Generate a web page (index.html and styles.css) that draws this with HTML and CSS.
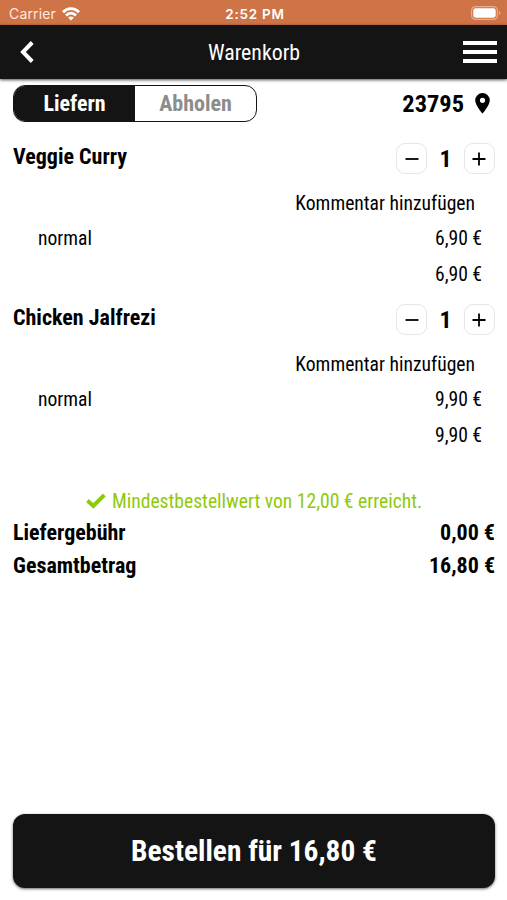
FILE: index.html
```html
<!DOCTYPE html>
<html lang="de">
<head>
  <meta charset="UTF-8">
  <meta name="viewport" content="width=device-width, initial-scale=1.0">
  <title>Warenkorb</title>
  <link rel="stylesheet" href="styles.css">
</head>
<body>
  <div class="status-bar">
    <div class="carrier">
      <span>Carrier</span>
      <svg width="18" height="14" viewBox="0 0 18 14" fill="none" stroke="#fff" stroke-width="2.8">
        <path d="M1 5.2C5.5 .5 12.5 .5 17 5.2"/>
        <path d="M4 8.5C7 5.5 11 5.5 14 8.5"/>
        <path d="M9 13.5L6.2 10.7C7.8 9.2 10.2 9.2 11.8 10.7Z" fill="#fff" stroke="none"/>
      </svg>
    </div>
    <div class="time">2:52 PM</div>
    <div class="battery">
      <svg width="30" height="15" viewBox="0 0 30 15">
        <rect x=".6" y=".6" width="25.8" height="12.8" rx="4" fill="none" stroke="#e3ae94" stroke-width="1.2"/>
        <rect x="2.3" y="2.3" width="22.4" height="9.4" rx="2.4" fill="#fff"/>
        <path d="M28 5Q31 7 28 9Z" fill="#e3ae94"/>
      </svg>
    </div>
  </div>

  <header class="header">
    <svg class="back" width="14" height="22" viewBox="0 0 14 22" fill="none" stroke="#fff" stroke-width="4">
      <path d="M12.2 1.5L3 11L12.2 20.5"/>
    </svg>
    <h1>Warenkorb</h1>
    <div class="menu"><span></span><span></span><span></span></div>
  </header>

  <main class="cart">
    <div class="delivery">
      <div class="toggle">
        <div class="toggle-option active">Liefern</div>
        <div class="toggle-option">Abholen</div>
      </div>
      <div class="location">
        <span>23795</span>
        <svg width="15" height="21" viewBox="0 0 15 21">
          <path fill="#000" fill-rule="evenodd" d="M7.5 0A7.3 7.3 0 0 0 .2 7.3C.2 12.5 7.5 20.6 7.5 20.6S14.8 12.5 14.8 7.3A7.3 7.3 0 0 0 7.5 0ZM7.5 4.7A2.6 2.6 0 1 1 7.5 9.9A2.6 2.6 0 1 1 7.5 4.7Z"/>
        </svg>
      </div>
    </div>

    <div class="item">
      <div class="item-head">
        <h2>Veggie Curry</h2>
        <div class="stepper">
          <button><svg width="14" height="14" viewBox="0 0 14 14"><path d="M.5 7H13.5"/></svg></button>
          <span>1</span>
          <button><svg width="14" height="14" viewBox="0 0 14 14"><path d="M.5 7H13.5M7 .5V13.5"/></svg></button>
        </div>
      </div>
      <div class="comment">Kommentar hinzufügen</div>
      <div class="item-row"><span>normal</span><span>6,90 €</span></div>
      <div class="item-row"><span></span><span>6,90 €</span></div>
    </div>

    <div class="item">
      <div class="item-head">
        <h2>Chicken Jalfrezi</h2>
        <div class="stepper">
          <button><svg width="14" height="14" viewBox="0 0 14 14"><path d="M.5 7H13.5"/></svg></button>
          <span>1</span>
          <button><svg width="14" height="14" viewBox="0 0 14 14"><path d="M.5 7H13.5M7 .5V13.5"/></svg></button>
        </div>
      </div>
      <div class="comment">Kommentar hinzufügen</div>
      <div class="item-row"><span>normal</span><span>9,90 €</span></div>
      <div class="item-row"><span></span><span>9,90 €</span></div>
    </div>

    <div class="minimum">
      <svg width="20" height="16" viewBox="0 0 20 16" fill="none" stroke="#8fca0a" stroke-width="4">
        <path d="M1.5 7.5L7.3 13L18.3 2"/>
      </svg>
      <span>Mindestbestellwert von 12,00 € erreicht.</span>
    </div>

    <div class="total-row"><span>Liefergebühr</span><span>0,00 €</span></div>
    <div class="total-row"><span>Gesamtbetrag</span><span>16,80 €</span></div>
  </main>

  <footer class="footer">
    <button class="order-btn">Bestellen für 16,80 €</button>
  </footer>
</body>
</html>
```
FILE: styles.css
```css
* {
  box-sizing: border-box;
}
body {
  display: flex;
  flex-direction: column;
  height: 900px;
  margin: 0;
  background-color: #fff;
  color: #000;
  font-family: 'Roboto Condensed', Roboto, sans-serif;
  font-stretch: 75%;
  font-size: 19.6px;
  overflow: hidden;
}
svg {
  display: block;
}
h1, h2 {
  margin: 0;
}
button {
  font-family: inherit;
  font-stretch: inherit;
  padding: 0;
}
.status-bar {
  display: grid;
  grid-template-columns: 1fr auto 1fr;
  align-items: center;
  height: 25px;
  padding: 2px 6px 0 9px;
  background-color: #cf7446;
  color: #fff;
  font-family: Inter, sans-serif;
  font-stretch: normal;
  font-size: 14px;
}
.carrier {
  display: flex;
  align-items: center;
  gap: 6px;
  color: #fbe9df;
  letter-spacing: 0.15px;
}
.time {
  font-size: 13.5px;
  font-weight: 600;
  letter-spacing: 0.75px;
}
.battery {
  justify-self: end;
}
.header {
  display: grid;
  grid-template-columns: 1fr auto 1fr;
  align-items: center;
  height: 54px;
  padding: 0 10px 0 20px;
  background-color: #141414;
  color: #fff;
  box-shadow: 0 1px 3px rgba(0, 0, 0, 0.7);
}
.header h1 {
  margin-right: 9px;
  font-size: 21.8px;
  font-weight: 400;
}
.menu {
  display: flex;
  flex-direction: column;
  justify-self: end;
  gap: 5px;
  width: 34px;
}
.menu span {
  height: 4px;
  background-color: #fff;
}
.cart {
  flex: 1;
  padding: 6px 12px 0 13px;
}
.delivery {
  display: flex;
  justify-content: space-between;
  height: 37px;
  margin-bottom: 21px;
}
.toggle {
  display: flex;
  width: 244px;
  border: 1px solid #141414;
  border-radius: 12px;
  overflow: hidden;
}
.toggle-option {
  flex: 1;
  color: #8c8c8c;
  font-size: 22px;
  font-weight: 700;
  line-height: 35px;
  text-align: center;
}
.toggle-option.active {
  background-color: #141414;
  color: #fff;
}
.location {
  display: flex;
  align-items: center;
  gap: 11px;
  padding-right: 5px;
  font-size: 24.4px;
  font-weight: 700;
}
.item {
  height: 161px;
}
.item-head {
  display: flex;
  justify-content: space-between;
  height: 42px;
}
.item-head h2 {
  font-size: 22px;
  font-weight: 700;
  line-height: 28px;
}
.stepper {
  display: flex;
  justify-content: space-between;
  align-items: center;
  width: 99px;
  height: 31px;
  font-size: 24px;
  font-weight: 700;
}
.stepper button {
  display: flex;
  align-items: center;
  justify-content: center;
  width: 31px;
  height: 31px;
  border: 1px solid #e6e6e6;
  border-radius: 9px;
  background-color: #fff;
}
.stepper path {
  stroke: #000;
  stroke-width: 1.8;
}
.comment {
  height: 36px;
  padding-right: 20px;
  line-height: 37px;
  text-align: right;
}
.item-row {
  display: flex;
  justify-content: space-between;
  padding: 0 13px 0 25px;
  line-height: 35.5px;
}
.minimum {
  display: flex;
  align-items: center;
  justify-content: center;
  gap: 6px;
  height: 30px;
  margin-top: 21px;
  color: #8fca0a;
}
.total-row {
  display: flex;
  justify-content: space-between;
  font-size: 22px;
  font-weight: 700;
  line-height: 33px;
}
.footer {
  padding: 0 12px 12px 13px;
}
.order-btn {
  width: 100%;
  height: 74px;
  border: none;
  border-radius: 12px;
  background-color: #141414;
  color: #fff;
  font-size: 29.4px;
  font-weight: 700;
  box-shadow: 0 1px 3px rgba(0, 0, 0, 0.6);
}
```
